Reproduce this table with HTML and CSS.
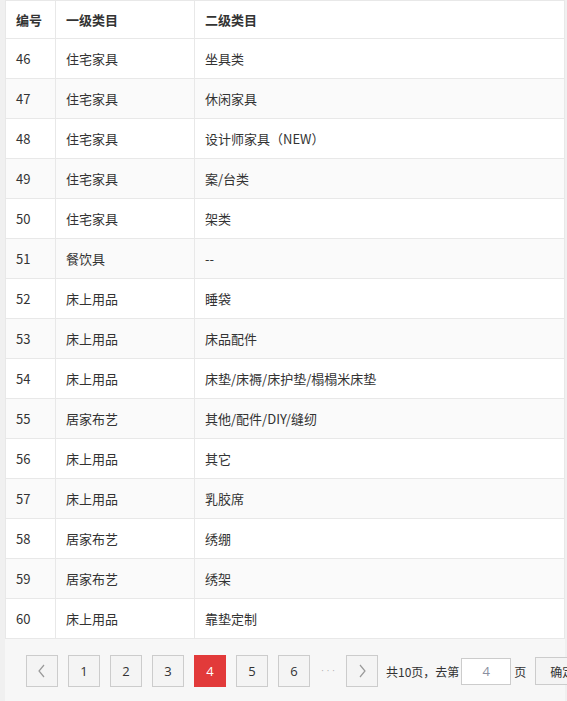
FILE: index.html
```html
<!DOCTYPE html>
<html lang="zh-CN">
<head>
<meta charset="utf-8">
<title>类目列表</title>
<link rel="stylesheet" href="styles.css">
</head>
<body>
<div class="page">
  <div class="table">
    <div class="row head"><div class="cell">编号</div><div class="cell">一级类目</div><div class="cell">二级类目</div></div>
    <div class="row"><div class="cell">46</div><div class="cell">住宅家具</div><div class="cell">坐具类</div></div>
    <div class="row"><div class="cell">47</div><div class="cell">住宅家具</div><div class="cell">休闲家具</div></div>
    <div class="row"><div class="cell">48</div><div class="cell">住宅家具</div><div class="cell">设计师家具（NEW）</div></div>
    <div class="row"><div class="cell">49</div><div class="cell">住宅家具</div><div class="cell">案/台类</div></div>
    <div class="row"><div class="cell">50</div><div class="cell">住宅家具</div><div class="cell">架类</div></div>
    <div class="row"><div class="cell">51</div><div class="cell">餐饮具</div><div class="cell">--</div></div>
    <div class="row"><div class="cell">52</div><div class="cell">床上用品</div><div class="cell">睡袋</div></div>
    <div class="row"><div class="cell">53</div><div class="cell">床上用品</div><div class="cell">床品配件</div></div>
    <div class="row"><div class="cell">54</div><div class="cell">床上用品</div><div class="cell">床垫/床褥/床护垫/榻榻米床垫</div></div>
    <div class="row"><div class="cell">55</div><div class="cell">居家布艺</div><div class="cell">其他/配件/DIY/缝纫</div></div>
    <div class="row"><div class="cell">56</div><div class="cell">床上用品</div><div class="cell">其它</div></div>
    <div class="row"><div class="cell">57</div><div class="cell">床上用品</div><div class="cell">乳胶席</div></div>
    <div class="row"><div class="cell">58</div><div class="cell">居家布艺</div><div class="cell">绣绷</div></div>
    <div class="row"><div class="cell">59</div><div class="cell">居家布艺</div><div class="cell">绣架</div></div>
    <div class="row"><div class="cell">60</div><div class="cell">床上用品</div><div class="cell">靠垫定制</div></div>
  </div>
  <div class="pager">
    <a class="pg arrow" href="#"><svg width="10" height="14" viewBox="0 0 10 14"><path d="M7 1 L2 7 L7 13" fill="none" stroke="#999" stroke-width="1.2"/></svg></a>
    <a class="pg" href="#">1</a>
    <a class="pg" href="#">2</a>
    <a class="pg" href="#">3</a>
    <a class="pg active" href="#">4</a>
    <a class="pg" href="#">5</a>
    <a class="pg" href="#">6</a>
    <span class="dots">···</span>
    <a class="pg arrow next" href="#"><svg width="10" height="14" viewBox="0 0 10 14"><path d="M3 1 L8 7 L3 13" fill="none" stroke="#999" stroke-width="1.2"/></svg></a>
    <span class="total">共10页，去第</span>
    <input class="goto" type="text" value="4">
    <span class="unit">页</span>
    <button class="ok" type="button">确定</button>
  </div>
</div>
</body>
</html>
```

FILE: styles.css
```css
html, body {
  margin: 0;
  padding: 0;
  background: #f0f0f0;
  overflow: hidden;
}
body {
  font-family: "Noto Sans CJK SC", "Noto Sans", sans-serif;
  font-size: 13px;
  color: #333;
  width: 567px;
  height: 701px;
}
.page {
  margin-left: 5px;
  width: 560px;
  background: #f7f7f7;
  height: 701px;
}
.table {
  background: #fff;
  border: 1px solid #e8e8e8;
  border-bottom: none;
}
.row {
  display: grid;
  grid-template-columns: 50px 139px 1fr;
  height: 40px;
  border-bottom: 1px solid #e8e8e8;
  box-sizing: border-box;
}
.row.head {
  height: 38px;
  font-weight: bold;
}
.row:nth-child(odd):not(.head) {
  background: #fafafa;
}
.cell {
  display: flex;
  align-items: center;
  padding: 0 10px;
  border-right: 1px solid #e8e8e8;
  white-space: nowrap;
}
.cell:last-child {
  border-right: none;
}
.pager {
  display: flex;
  align-items: center;
  padding: 16px 0 0 21px;
  white-space: nowrap;
  font-size: 12px;
}
.pg {
  width: 32px;
  height: 32px;
  box-sizing: border-box;
  border: 1px solid #ccc;
  background: #f4f4f4;
  color: #333;
  text-decoration: none;
  display: flex;
  align-items: center;
  justify-content: center;
  margin-right: 10px;
  flex: none;
  font-size: 13px;
  font-family: "Open Sans", "Noto Sans", sans-serif;
}
.pg.active {
  background: #e23a3a;
  border-color: #e23a3a;
  color: #fff;
}
.dots {
  width: 16px;
  margin-right: 10px;
  display: flex;
  justify-content: center;
  overflow: visible;
  color: #aaa;
  font-family: "DejaVu Sans", sans-serif;
  font-size: 8px;
  letter-spacing: 3px;
  text-indent: 3px;
}
.pg.next { margin-right: 0; }
.total {
  margin-left: 8px;
  color: #333;
}
.goto {
  margin: 0 0 0 2px;
  width: 50px;
  height: 27px;
  box-sizing: border-box;
  border: 1px solid #ccc;
  background: #fff;
  text-align: center;
  color: #8a8fa0;
  font-size: 13px;
  font-family: "Open Sans", "Noto Sans", sans-serif;
  padding: 0;
}
.unit {
  margin-left: 3px;
}
.ok {
  margin-left: 9px;
  height: 28px;
  width: 56px;
  box-sizing: border-box;
  border: 1px solid #ccc;
  background: #f4f4f4;
  color: #333;
  font-size: 12px;
  font-family: "Noto Sans CJK SC", sans-serif;
  padding: 0 0 0 14px;
  text-align: left;
  flex: none;
}
```
